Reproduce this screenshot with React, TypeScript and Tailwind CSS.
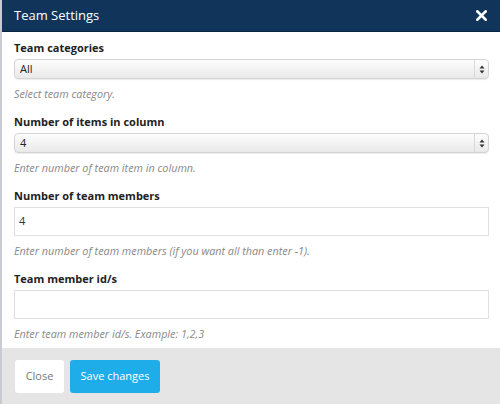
import { X } from 'lucide-react';

function SelectBox({ value }: { value: string }) {
  return (
    <div className="flex h-[20px] items-stretch rounded-[4px] border border-[#d4d4d4] bg-gradient-to-b from-[#fdfdfd] to-[#e9e9e9] shadow-[0_1px_1px_rgba(0,0,0,0.08)]">
      <span className="flex flex-1 items-center pl-[5px] text-[11px] text-[#222]">{value}</span>
      <span className="flex w-[14px] items-center justify-center border-l border-[#d8d8d8]">
        <svg width="6" height="9" viewBox="0 0 6 9" aria-hidden="true">
          <path d="M3 0.5 L5.5 3.5 H0.5 Z" fill="#333" />
          <path d="M3 8.5 L5.5 5.5 H0.5 Z" fill="#333" />
        </svg>
      </span>
    </div>
  );
}

function TextBox({ value }: { value?: string }) {
  return (
    <div className="flex h-[29px] items-center border border-[#e0e0e0] bg-white pl-[4px] text-[11px] text-[#333]">
      {value}
    </div>
  );
}

function Field({
  label,
  hint,
  children,
}: {
  label: string;
  hint: string;
  children: React.ReactNode;
}) {
  return (
    <div>
      <div className="mb-[3px] text-[11px] leading-[16px] font-bold text-[#222]">{label}</div>
      {children}
      <div className="mt-[7px] text-[10.8px] leading-[15px] text-[#888] italic">{hint}</div>
    </div>
  );
}

export default function App() {
  return (
    <div
      className="flex h-[404px] w-[500px] flex-col overflow-hidden border-l-2 border-[#c8ccd0] bg-white"
      style={{ fontFamily: '"Open Sans", "Liberation Sans", sans-serif' }}
    >
      <div className="flex h-[32px] shrink-0 items-center justify-between border-b border-[#0a2540] bg-[#11355a] pr-[10px] pl-[12px]">
        <span className="text-[13px] text-white">Team Settings</span>
        <X className="h-[17px] w-[17px] text-white" strokeWidth={3.5} />
      </div>
      <div className="flex flex-1 flex-col gap-[13px] pt-[8px] pr-[11px] pl-[12px]">
        <Field label="Team categories" hint="Select team category.">
          <SelectBox value="All" />
        </Field>
        <Field label="Number of items in column" hint="Enter number of team item in column.">
          <SelectBox value="4" />
        </Field>
        <Field
          label="Number of team members"
          hint="Enter number of team members (if you want all than enter -1)."
        >
          <TextBox value="4" />
        </Field>
        <Field label="Team member id/s" hint="Enter team member id/s. Example: 1,2,3">
          <TextBox />
        </Field>
      </div>
      <div className="flex h-[56px] shrink-0 items-start gap-[6px] bg-[#e5e5e5] pt-[12px] pl-[13px]">
        <button className="h-[33px] w-[49px] rounded-[3px] bg-white text-[11px] text-[#777]">
          Close
        </button>
        <button className="h-[33px] w-[90px] rounded-[3px] bg-[#1fadea] text-[11px] text-white">
          Save changes
        </button>
      </div>
    </div>
  );
}
